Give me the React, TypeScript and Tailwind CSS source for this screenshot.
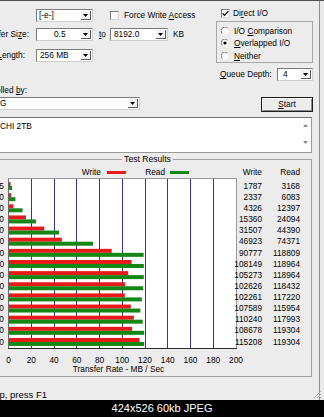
import React from "react";

const labels = ["0.5", "1.0", "2.0", "4.0", "8.0", "16.0", "32.0", "64.0", "128.0", "256.0", "512.0", "1024.0", "2048.0", "4096.0", "8192.0"];
const writes = [1787, 2337, 4326, 15360, 31507, 46923, 90777, 108149, 105273, 102626, 102261, 107589, 110240, 108678, 115208];
const reads = [3168, 6083, 12397, 24094, 44390, 74371, 118809, 118964, 118964, 118432, 117220, 115954, 117993, 119304, 119304];

const ROW = 11.14;
const PX = 1.1375;

function U({ c }: { c: string }) {
  return <span className="underline decoration-1 underline-offset-[1px]">{c}</span>;
}

function Arrow() {
  return (
    <svg width="5" height="3" viewBox="0 0 5 3" className="block">
      <path d="M0 0H5L2.5 3Z" fill="#000" />
    </svg>
  );
}

function Combo({ box, text, pad }: { box: string; text: string; pad: string }) {
  return (
    <div className={`h-[13px] shrink-0 flex bg-white border border-[#7b7b7b] border-r-[#cfcfcf] border-b-[#cfcfcf] ${box}`}>
      <div className={`flex-1 flex items-center whitespace-nowrap overflow-hidden ${pad}`}>{text}</div>
      <div className="w-[10px] my-[1px] mr-[1px] flex items-center justify-center bg-[#f3f3f3] border-r border-b border-[#5a5a5a]">
        <Arrow />
      </div>
    </div>
  );
}

function Check({ on }: { on?: boolean }) {
  return (
    <div className="w-[9px] h-[9px] shrink-0 bg-white border border-[#7b7b7b] border-r-[#d8d8d8] border-b-[#d8d8d8] flex items-center justify-center">
      {on && (
        <svg width="7" height="7" viewBox="0 0 7 7" className="block">
          <path d="M0.6 3.4L2.5 5.4L6.4 1.3" stroke="#000" strokeWidth="1.3" fill="none" />
        </svg>
      )}
    </div>
  );
}

function Radio({ on }: { on?: boolean }) {
  return (
    <svg width="8" height="8" viewBox="0 0 8 8" className="block shrink-0">
      <circle cx="4" cy="4" r="3.5" fill="#fdfdfd" />
      <path d="M1.2 6.6A3.5 3.5 0 0 1 6.6 1.2" stroke="#7a7a7a" strokeWidth="1" fill="none" />
      {on && <circle cx="4" cy="4" r="1.6" fill="#000" />}
    </svg>
  );
}

function Chart() {
  const W = 229;
  const H = 171;
  const grid = Array.from({ length: 9 }, (_, k) => Math.round(0.5 + 22.75 * (k + 1) - 0.5) + 0.5);
  return (
    <svg width={W} height={H} viewBox={`0 0 ${W} ${H}`} className="block shrink-0">
      <rect x="0" y="0" width={W} height={H} fill="#fff" />
      {grid.map((x, k) => (
        <line key={k} x1={x} y1={0} x2={x} y2={H} stroke="#34349e" strokeWidth="1" />
      ))}
      {writes.map((w, i) => {
        const cy = 8 + ROW * i;
        return (
          <g key={i}>
            <rect x={1} y={cy - 4} width={Math.max(1, (w / 1000) * PX - 0.5)} height={4} fill="#e8191b" />
            <rect x={1} y={cy} width={Math.max(1, (reads[i] / 1000) * PX - 0.5)} height={4} fill="#148714" />
          </g>
        );
      })}
      <line x1="0.5" y1="0" x2="0.5" y2={H} stroke="#6a6a6a" />
      <line x1="0" y1="0.5" x2={W} y2="0.5" stroke="#9a9a9a" />
      <line x1={W - 0.5} y1="0" x2={W - 0.5} y2={H} stroke="#9a9a9a" />
      <line x1="0" y1={H - 0.5} x2={W} y2={H - 0.5} stroke="#2a2a2a" />
    </svg>
  );
}

export default function App() {
  return (
    <div className="w-[324px] h-[417px] overflow-hidden bg-black font-['Liberation_Sans',Arial,sans-serif] text-[8.3px] leading-none text-black">
      <div className="relative h-[400px] flex bg-[#ececec] border-t border-[#505050]">
        <div className="w-[319px] flex flex-col">
          {/* top section */}
          <div className="h-[112px] flex shrink-0">
            <div className="w-[216px] flex flex-col">
              <div className="mt-[8px] h-[13px] flex items-center">
                <Combo box="ml-[36px] w-[57px]" pad="pl-[2px]" text="[-e-]" />
                <div className="ml-[17px]">
                  <Check />
                </div>
                <span className="ml-[5px] whitespace-nowrap">
                  Force Write <U c="A" />ccess
                </span>
              </div>
              <div className="mt-[6px] h-[13px] flex items-center">
                <div className="w-[29px] shrink-0 flex justify-end whitespace-nowrap">
                  <span>
                    Transfer Si<U c="z" />e:
                  </span>
                </div>
                <Combo box="ml-[7px] w-[57px]" pad="pl-[17px]" text="0.5" />
                <span className="ml-[6px]">
                  <U c="t" />o
                </span>
                <Combo box="ml-[4px] w-[58px]" pad="pl-[3px]" text="8192.0" />
                <span className="ml-[5px]">KB</span>
              </div>
              <div className="mt-[8px] h-[13px] flex items-center">
                <div className="w-[25px] shrink-0 flex justify-end whitespace-nowrap">
                  <span>
                    Total <U c="L" />ength:
                  </span>
                </div>
                <Combo box="ml-[11px] w-[57px]" pad="pl-[3px]" text="256 MB" />
              </div>
              <div className="mt-[23px] h-[10px] flex items-center">
                <div className="w-[27px] shrink-0 flex justify-end whitespace-nowrap">
                  <span>
                    Controlled <U c="b" />y:
                  </span>
                </div>
              </div>
              <div className="mt-[2px] h-[13px] flex items-center">
                <Combo box="ml-[-3px] w-[143px]" pad="pl-[2px]" text="G" />
              </div>
            </div>
            <div className="w-[97px] flex flex-col">
              <div className="mt-[8px] h-[9px] flex items-center">
                <div className="ml-[5px]">
                  <Check on />
                </div>
                <span className="ml-[3px] whitespace-nowrap">
                  Di<U c="r" />ect I/O
                </span>
              </div>
              <div className="mt-[3px] h-[42px] border border-[#a6a6a6] flex flex-col pt-[3px]">
                <div className="h-[12.5px] flex items-center pl-[4px]">
                  <Radio />
                  <span className="ml-[5px] whitespace-nowrap">
                    I/O <U c="C" />omparison
                  </span>
                </div>
                <div className="h-[12.5px] flex items-center pl-[4px]">
                  <Radio on />
                  <span className="ml-[5px] whitespace-nowrap">
                    <U c="O" />verlapped I/O
                  </span>
                </div>
                <div className="h-[12.5px] flex items-center pl-[4px]">
                  <Radio />
                  <span className="ml-[5px] whitespace-nowrap">
                    <U c="N" />either
                  </span>
                </div>
              </div>
              <div className="mt-[5px] h-[13px] flex items-center">
                <span className="ml-[4px] w-[57px] whitespace-nowrap">
                  <U c="Q" />ueue Depth:
                </span>
                <Combo box="w-[36px]" pad="pl-[5px]" text="4" />
              </div>
              <div className="mt-[16px] ml-[45px] w-[52px] h-[15px] flex items-center justify-center bg-[#ececec] border border-[#1e1e1e] shadow-[inset_1px_1px_0_#ffffff,inset_-1px_-1px_0_#8a8a8a]">
                <span>
                  <U c="S" />tart
                </span>
              </div>
            </div>
          </div>

          {/* description box */}
          <div className="mt-[4px] ml-[-2px] w-[314px] h-[36px] shrink-0 flex bg-white border border-[#6e6e6e] border-r-[#9a9a9a] border-b-[#9a9a9a]">
            <div className="flex-1 pt-[4px] pl-[1px] whitespace-nowrap">CHI 2TB</div>
            <div className="w-[12px] flex flex-col items-center justify-between pt-[6px] pb-[8px]">
              <svg width="5" height="3" viewBox="0 0 5 3" className="block">
                <path d="M0 3H5L2.5 0Z" fill="#8a8a8a" />
              </svg>
              <svg width="5" height="3" viewBox="0 0 5 3" className="block">
                <path d="M0 0H5L2.5 3Z" fill="#8a8a8a" />
              </svg>
            </div>
          </div>

          {/* Test results group */}
          <div className="mt-[2px] h-[9px] flex shrink-0">
            <div className="w-[122px] mt-[4px] border-t border-[#a0a0a0]" />
            <div className="w-[51px] text-center whitespace-nowrap text-[8.6px]">Test Results</div>
            <div className="w-[139px] mt-[4px] h-[5px] border-t border-r border-[#a0a0a0]" />
          </div>
          <div className="w-[312px] shrink-0 flex flex-col border-r border-b border-[#a0a0a0]">
            <div className="mt-[3px] h-[10px] flex items-center">
              <div className="w-[101px] text-right">Write</div>
              <div className="ml-[6px] w-[19px] h-[3px] bg-[#e8191b]" />
              <div className="w-[39px] text-right">Read</div>
              <div className="ml-[5px] w-[19px] h-[3px] bg-[#148714]" />
              <div className="w-[73px] text-right">Write</div>
              <div className="w-[38px] text-right">Read</div>
            </div>
            <div className="mt-[1px] h-[171px] flex">
              <div className="w-[8px] shrink-0 flex flex-col pt-[2.43px] pr-[4px]">
                {labels.map((l) => (
                  <div key={l} className="h-[11.14px] flex items-center justify-end whitespace-nowrap">
                    <span>{l}</span>
                  </div>
                ))}
              </div>
              <Chart />
              <div className="w-[25px] shrink-0 flex flex-col pt-[2.43px]">
                {writes.map((v, i) => (
                  <div key={i} className="h-[11.14px] flex items-center justify-end whitespace-nowrap">
                    {v}
                  </div>
                ))}
              </div>
              <div className="w-[38px] shrink-0 flex flex-col pt-[2.43px]">
                {reads.map((v, i) => (
                  <div key={i} className="h-[11.14px] flex items-center justify-end whitespace-nowrap">
                    {v}
                  </div>
                ))}
              </div>
            </div>
            <div className="mt-[6px] h-[10px] flex items-center ml-[-2.875px]">
              {[0, 20, 40, 60, 80, 100, 120, 140, 160, 180, 200].map((n) => (
                <div key={n} className="w-[22.75px] shrink-0 text-center">
                  {n}
                </div>
              ))}
            </div>
            <div className="h-[9px] w-[237px] flex items-center justify-center whitespace-nowrap">
              Transfer Rate - MB / Sec
            </div>
            <div className="h-[2px]" />
          </div>

          {/* status bar */}
          <div className="flex-1 flex items-end pb-[1px]">
            <div className="w-[47px] flex justify-end whitespace-nowrap text-[9.5px]">
              <span>For Help, press F1</span>
            </div>
          </div>
        </div>
        <div className="w-[5px] border-l border-[#8c8c8c] bg-[#e9e9e9]" />
        <svg width="9" height="9" viewBox="0 0 9 9" className="absolute right-[2px] bottom-[1px]">
          <path d="M8 1L1 8M8 4L4 8M8 7L7 8" stroke="#9a9a9a" strokeWidth="1" />
          <path d="M9 1L2 8M9 4L5 8" stroke="#ffffff" strokeWidth="0.6" />
        </svg>
      </div>
      <div className="h-[17px] flex items-center justify-center text-white text-[11px] whitespace-nowrap">
        424x526 60kb JPEG
      </div>
    </div>
  );
}
